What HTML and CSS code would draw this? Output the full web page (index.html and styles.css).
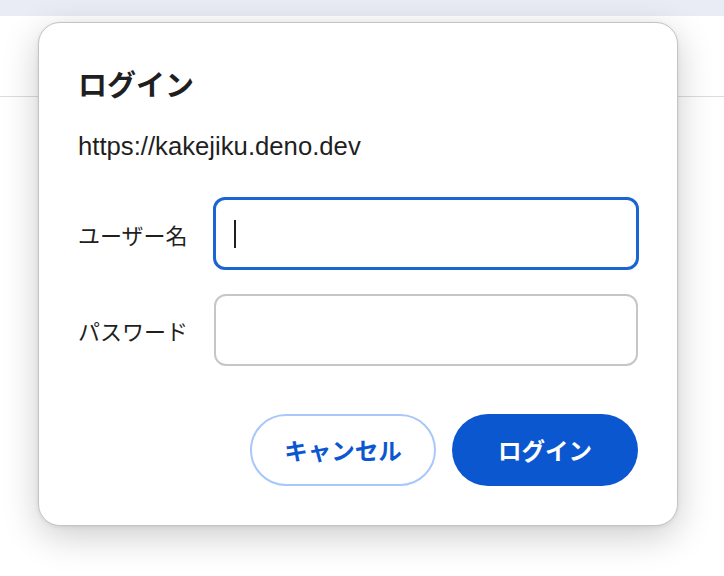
FILE: index.html
```html
<!DOCTYPE html>
<html lang="ja">
<head>
<meta charset="utf-8">
<link rel="stylesheet" href="styles.css">
</head>
<body>
<div class="page">
  <div class="topstrip"></div>
  <div class="header"></div>
</div>
<div class="dialog">
  <h1 class="title">ログイン</h1>
  <div class="origin">https://kakejiku.deno.dev</div>
  <div class="form">
    <label class="label">ユーザー名</label>
    <div class="field field-focused"><span class="caret"></span></div>
    <label class="label">パスワード</label>
    <div class="field"></div>
  </div>
  <div class="actions">
    <button class="btn btn-cancel">キャンセル</button>
    <button class="btn btn-primary">ログイン</button>
  </div>
</div>
</body>
</html>
```
FILE: styles.css
```css
html, body {
  margin: 0;
  padding: 0;
  background: #ffffff;
  font-family: "Liberation Sans", "Noto Sans CJK JP", sans-serif;
  color: #1f1f1f;
}
.page {
  width: 724px;
  height: 576px;
}
.topstrip {
  height: 16px;
  background: #e9ecf4;
}
.header {
  height: 80px;
  border-bottom: 1px solid #dcdcdc;
}
.dialog {
  position: absolute;
  left: 38px;
  top: 22px;
  width: 640px;
  height: 504px;
  box-sizing: border-box;
  padding: 39px;
  background: #ffffff;
  border: 1px solid #c4c4c4;
  border-radius: 22px;
  box-shadow: 0 10px 36px rgba(0, 0, 0, 0.2), 0 1px 4px rgba(0, 0, 0, 0.08);
  display: flex;
  flex-direction: column;
}
.title {
  margin: 0;
  font-size: 29px;
  line-height: 48px;
  font-weight: 700;
  color: #1f1f1f;
}
.origin {
  margin-top: 20px;
  font-size: 25.7px;
  line-height: 32px;
  color: #1f1f1f;
}
.form {
  margin-top: 35px;
  display: grid;
  grid-template-columns: 136px 1fr;
  grid-template-rows: 73px 72px;
  row-gap: 24px;
  align-items: center;
}
.label {
  font-size: 22px;
  color: #1f1f1f;
}
.field {
  height: 72px;
  box-sizing: border-box;
  border: 2px solid #c6c6c6;
  border-radius: 12px;
  background: #fff;
}
.field-focused {
  height: 73px;
  border: 3px solid #1b65d3;
  margin-left: -1px;
  margin-right: -1px;
  display: flex;
  align-items: center;
  padding-left: 18px;
}
.caret {
  width: 2px;
  height: 28px;
  background: #1f1f1f;
}
.actions {
  margin-top: 48px;
  display: flex;
  justify-content: flex-end;
  gap: 16px;
}
.btn {
  width: 186px;
  height: 72px;
  border-radius: 36px;
  font-family: "Liberation Sans", "Noto Sans CJK JP", sans-serif;
  font-size: 23.5px;
  font-weight: 700;
  box-sizing: border-box;
  padding: 0;
}
.btn-cancel {
  background: #ffffff;
  border: 2px solid #a8c7fa;
  color: #0b57d0;
}
.btn-primary {
  background: #0b57d0;
  border: none;
  color: #ffffff;
}
```
